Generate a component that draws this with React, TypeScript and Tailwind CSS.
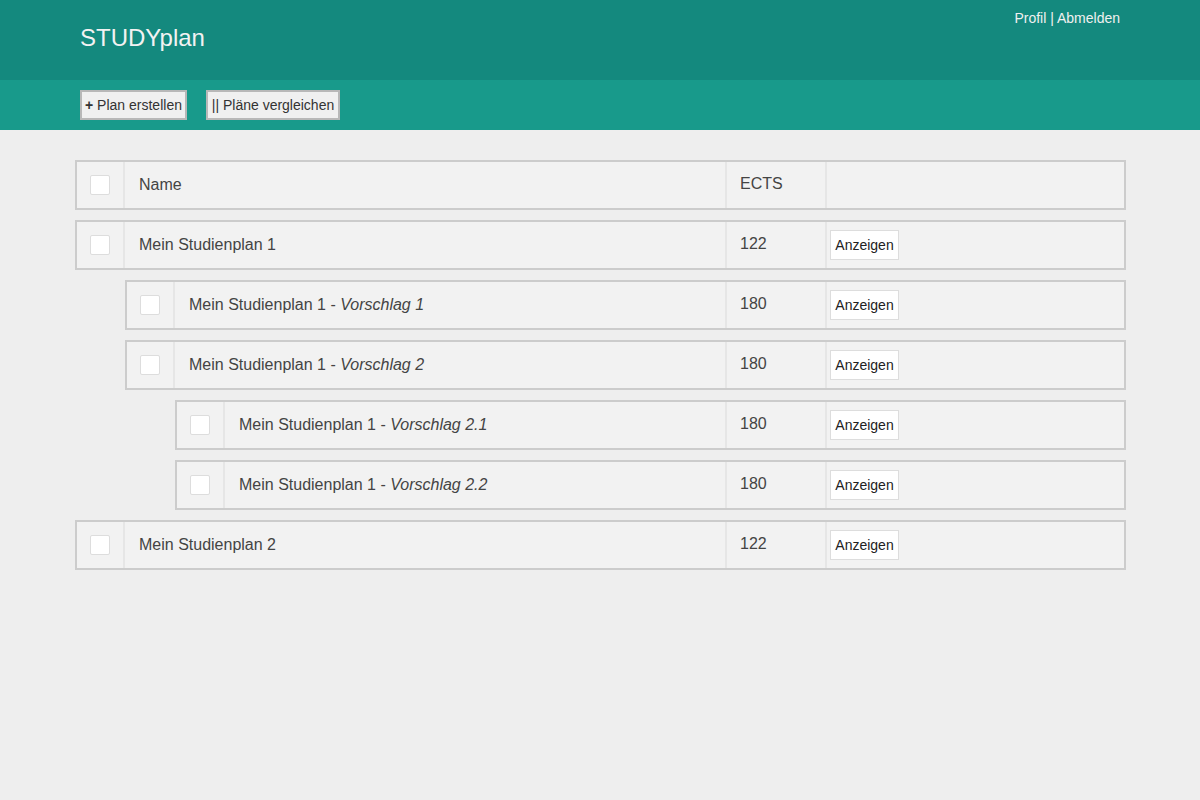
import React from 'react';

interface Plan {
  name: string;
  variant?: string;
  ects: number;
  level: number;
}

const plans: Plan[] = [
  { name: 'Mein Studienplan 1', ects: 122, level: 0 },
  { name: 'Mein Studienplan 1', variant: 'Vorschlag 1', ects: 180, level: 1 },
  { name: 'Mein Studienplan 1', variant: 'Vorschlag 2', ects: 180, level: 1 },
  { name: 'Mein Studienplan 1', variant: 'Vorschlag 2.1', ects: 180, level: 2 },
  { name: 'Mein Studienplan 1', variant: 'Vorschlag 2.2', ects: 180, level: 2 },
  { name: 'Mein Studienplan 2', ects: 122, level: 0 },
];

const indent = ['ml-0', 'ml-[50px]', 'ml-[100px]'];

function Checkbox() {
  return <div className="w-5 h-5 rounded-[2px] bg-white border border-[#dddddd]" />;
}

function Row({ children, ects, action, level = 0 }: { children: React.ReactNode; ects: React.ReactNode; action?: boolean; level?: number }) {
  return (
    <div className={`flex h-[50px] mb-[10px] border-2 border-[#cccccc] bg-[#f2f2f2] ${indent[level]}`}>
      {/* checkbox */}
      <div className="w-[48px] flex items-center justify-center border-r-2 border-[#e6e6e6]">
        <Checkbox />
      </div>
      {/* name */}
      <div className="flex-1 flex items-center px-[14px] text-base text-[#444444]">{children}</div>
      {/* ects */}
      <div className="w-[100px] border-l-2 border-[#e6e6e6] pt-[10px] px-[13px] text-base text-[#444444]">{ects}</div>
      {/* action */}
      <div className="w-[299px] border-l-2 border-[#e6e6e6] flex items-center pl-[3px]">
        {action && (
          <button className="h-[30px] w-[69px] bg-white border border-[#dddddd] text-sm text-[#222222]">Anzeigen</button>
        )}
      </div>
    </div>
  );
}

export default function App() {
  return (
    <div className="min-h-[800px] bg-[#eeeeee] font-['Liberation_Sans',Arial,sans-serif]">
      {/* Header */}
      <div className="h-[80px] bg-[#14897e]">
        <div className="w-[1040px] mx-auto relative h-full">
          <div className="absolute right-0 top-[8px] text-sm text-[#f0f0f0]">Profil | Abmelden</div>
          <div className="pt-[22px] text-2xl text-[#f2f2f2]">STUDYplan</div>
        </div>
      </div>

      {/* Toolbar */}
      <div className="h-[50px] bg-[#189a8b]">
        <div className="w-[1040px] mx-auto flex items-center h-full gap-[19px]">
          <button className="h-[30px] w-[107px] bg-[#f0f0f0] border-2 border-[#b8b8b8] text-sm text-[#333333]">
            <span className="font-bold">+</span> Plan erstellen
          </button>
          <button className="h-[30px] w-[134px] bg-[#f0f0f0] border-2 border-[#b8b8b8] text-sm text-[#333333]">
            || Pläne vergleichen
          </button>
        </div>
      </div>

      {/* Plans */}
      <div className="w-[1051px] ml-[75px] pt-[30px]">
        <Row ects="ECTS">Name</Row>
        {plans.map((p, i) => (
          <Row key={i} ects={p.ects} action level={p.level}>
            {p.name}
            {p.variant && (
              <>
                &nbsp;-&nbsp;<i>{p.variant}</i>
              </>
            )}
          </Row>
        ))}
      </div>
    </div>
  );
}
